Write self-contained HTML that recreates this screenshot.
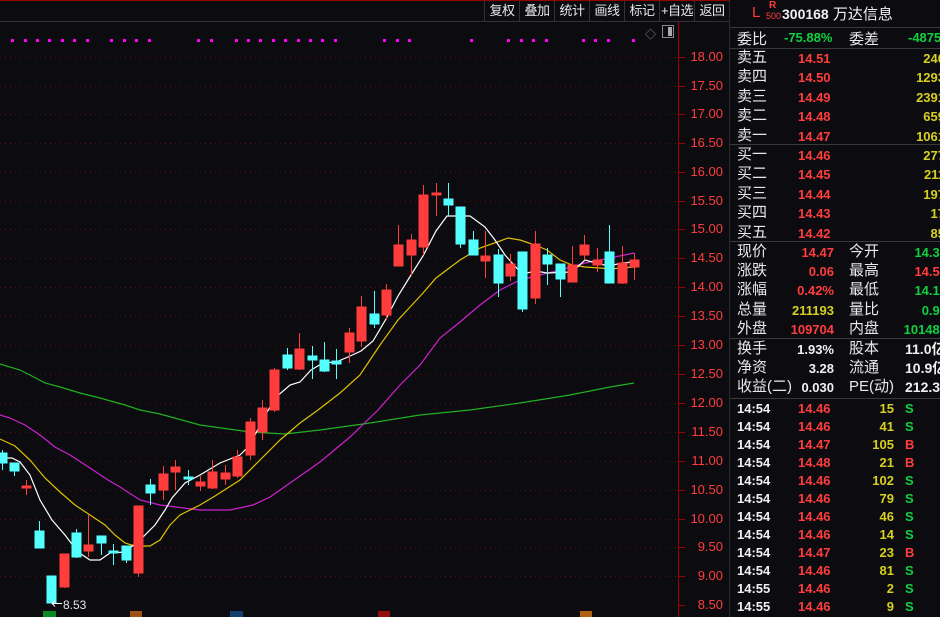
<!DOCTYPE html>
<html><head><meta charset="utf-8"><style>
*{margin:0;padding:0;box-sizing:border-box}
body{width:940px;height:617px;background:#0c0c10;overflow:hidden;position:relative;font-family:"Liberation Sans","Noto Sans CJK SC",sans-serif;color:#e8e8e8}
.a{position:absolute;white-space:nowrap}
.menu{position:absolute;top:0;left:484px;height:22px;display:flex}
.menu div{height:22px;width:35px;line-height:22px;font-size:13px;color:#e8e8e8;text-align:center;border-left:1px solid #333;overflow:hidden;letter-spacing:-0.5px}
.r{color:#ff3d3d}.g{color:#10d040}.y{color:#d8d020}.w{color:#f0f0f0}
.lb{font-size:15px;color:#e8e8e8}
.n{font-weight:bold;font-size:13px}
.pl{position:absolute;left:690px;font-size:13px;color:#ff3d3d;width:33px;text-align:right}
</style></head><body>
<div class="a" style="left:0;top:0;width:730px;height:1px;background:#900"></div>
<div class="a" style="left:0;top:21px;width:730px;height:1px;background:#333"></div>
<div class="menu"><div>复权</div><div>叠加</div><div>统计</div><div>画线</div><div>标记</div><div>+自选</div><div>返回</div></div>
<div class="a" style="left:645px;top:26px;font-size:11px;color:#888">◇</div>
<div class="a" style="left:662px;top:25px;width:12px;height:13px;border:1px solid #888"><div style="position:absolute;right:1px;top:1px;width:4px;height:9px;background:#aaa"></div></div>
<div class="a" style="left:729px;top:0;width:1px;height:617px;background:#2a2a2a"></div>

<svg class="a" style="left:0;top:0" width="730" height="617">
<g stroke="#5a1010" stroke-dasharray="1,4" stroke-width="1">
<line x1="0" y1="57.5" x2="678" y2="57.5"/><line x1="0" y1="86.5" x2="678" y2="86.5"/><line x1="0" y1="114.5" x2="678" y2="114.5"/><line x1="0" y1="143.5" x2="678" y2="143.5"/><line x1="0" y1="172.5" x2="678" y2="172.5"/><line x1="0" y1="201.5" x2="678" y2="201.5"/><line x1="0" y1="229.5" x2="678" y2="229.5"/><line x1="0" y1="258.5" x2="678" y2="258.5"/><line x1="0" y1="287.5" x2="678" y2="287.5"/><line x1="0" y1="316.5" x2="678" y2="316.5"/><line x1="0" y1="345.5" x2="678" y2="345.5"/><line x1="0" y1="374.5" x2="678" y2="374.5"/><line x1="0" y1="403.5" x2="678" y2="403.5"/><line x1="0" y1="432.5" x2="678" y2="432.5"/><line x1="0" y1="461.5" x2="678" y2="461.5"/><line x1="0" y1="490.5" x2="678" y2="490.5"/><line x1="0" y1="519.5" x2="678" y2="519.5"/><line x1="0" y1="547.5" x2="678" y2="547.5"/><line x1="0" y1="576.5" x2="678" y2="576.5"/>
</g>
<line x1="678.5" y1="22" x2="678.5" y2="617" stroke="#a00000"/>
<g stroke="#a00000"><line x1="678" y1="57.5" x2="685" y2="57.5"/><line x1="678" y1="86.5" x2="685" y2="86.5"/><line x1="678" y1="114.5" x2="685" y2="114.5"/><line x1="678" y1="143.5" x2="685" y2="143.5"/><line x1="678" y1="172.5" x2="685" y2="172.5"/><line x1="678" y1="201.5" x2="685" y2="201.5"/><line x1="678" y1="229.5" x2="685" y2="229.5"/><line x1="678" y1="258.5" x2="685" y2="258.5"/><line x1="678" y1="287.5" x2="685" y2="287.5"/><line x1="678" y1="316.5" x2="685" y2="316.5"/><line x1="678" y1="345.5" x2="685" y2="345.5"/><line x1="678" y1="374.5" x2="685" y2="374.5"/><line x1="678" y1="403.5" x2="685" y2="403.5"/><line x1="678" y1="432.5" x2="685" y2="432.5"/><line x1="678" y1="461.5" x2="685" y2="461.5"/><line x1="678" y1="490.5" x2="685" y2="490.5"/><line x1="678" y1="519.5" x2="685" y2="519.5"/><line x1="678" y1="547.5" x2="685" y2="547.5"/><line x1="678" y1="576.5" x2="685" y2="576.5"/><line x1="678" y1="605.5" x2="685" y2="605.5"/></g>
<g fill="#ff00ff">
<rect x="11" y="39" width="3" height="3"/><rect x="24" y="39" width="3" height="3"/><rect x="36" y="39" width="3" height="3"/><rect x="48" y="39" width="3" height="3"/><rect x="61" y="39" width="3" height="3"/><rect x="73" y="39" width="3" height="3"/><rect x="86" y="39" width="3" height="3"/><rect x="110" y="39" width="3" height="3"/><rect x="123" y="39" width="3" height="3"/><rect x="135" y="39" width="3" height="3"/><rect x="148" y="39" width="3" height="3"/><rect x="197" y="39" width="3" height="3"/><rect x="210" y="39" width="3" height="3"/><rect x="235" y="39" width="3" height="3"/><rect x="247" y="39" width="3" height="3"/><rect x="259" y="39" width="3" height="3"/><rect x="272" y="39" width="3" height="3"/><rect x="284" y="39" width="3" height="3"/><rect x="297" y="39" width="3" height="3"/><rect x="309" y="39" width="3" height="3"/><rect x="321" y="39" width="3" height="3"/><rect x="334" y="39" width="3" height="3"/><rect x="383" y="39" width="3" height="3"/><rect x="396" y="39" width="3" height="3"/><rect x="408" y="39" width="3" height="3"/><rect x="470" y="39" width="3" height="3"/><rect x="507" y="39" width="3" height="3"/><rect x="520" y="39" width="3" height="3"/><rect x="532" y="39" width="3" height="3"/><rect x="545" y="39" width="3" height="3"/><rect x="582" y="39" width="3" height="3"/><rect x="594" y="39" width="3" height="3"/><rect x="607" y="39" width="3" height="3"/><rect x="632" y="39" width="3" height="3"/>
</g>
<g fill="none" stroke-width="1.2">
<polyline stroke="#20b020" points="0,364 20,370 30,375 45,383 60,387 80,393 100,398 125,405 140,410 160,414 200,425 250,432 285,434 320,430 370,423 420,415 470,410 520,403 570,395 610,387 634,383"/>
<polyline stroke="#d020d0" points="0,415 10,418 25,425 40,435 55,447 70,455 90,468 108,480 120,487 140,500 160,505 200,510 230,510 253,505 270,497 290,483 320,462 350,437 378,410 400,385 420,365 440,338 460,322 480,305 500,290 520,280 540,275 560,270 585,263 610,258 634,253"/>
<polyline stroke="#e0c000" points="0,439 15,446 30,460 45,478 60,492 75,505 90,515 105,525 115,535 125,543 135,546 150,546 160,540 170,525 180,515 200,505 215,496 240,480 260,460 280,440 300,423 318,410 340,393 360,375 380,345 398,320 411,306 423,293 436,278 460,260 480,248 500,241 508,238 520,240 535,245 547,250 560,260 572,265 585,267 600,268 610,269 634,267"/>
<polyline stroke="#ffffff" points="0,458 12,458 20,462 30,475 40,500 52,520 65,535 78,552 90,560 100,560 110,553 125,552 140,540 155,525 165,510 172,498 185,483 200,475 220,463 240,455 250,445 260,425 275,398 290,385 300,382 311,370 323,363 336,362 348,357 361,351 373,341 386,319 398,296 411,275 423,256 436,231 447,216 470,216 485,227 495,240 505,255 522,274 536,271 547,273 572,272 585,260 600,264 609,266 622,263 634,262"/>
</g>
<g stroke-width="1">
<g stroke="#54ffff" fill="#54ffff">
<line x1="2.5" y1="450" x2="2.5" y2="470"/><rect x="-2" y="453" width="9" height="10"/>
<line x1="14.5" y1="463" x2="14.5" y2="476"/><rect x="10" y="463" width="9" height="8"/>
<line x1="39.5" y1="521" x2="39.5" y2="548"/><rect x="35" y="531" width="9" height="17"/>
<rect x="47" y="576" width="9" height="27"/>
<line x1="76.5" y1="529" x2="76.5" y2="558"/><rect x="72" y="533" width="9" height="24"/>
<line x1="101.5" y1="536" x2="101.5" y2="555"/><rect x="97" y="536" width="9" height="7"/>
<line x1="113.5" y1="544" x2="113.5" y2="565"/><rect x="109" y="551" width="9" height="2"/>
<line x1="126.5" y1="546" x2="126.5" y2="563"/><rect x="122" y="546" width="9" height="14"/>
<line x1="150.5" y1="479" x2="150.5" y2="505"/><rect x="146" y="485" width="9" height="8"/>
<line x1="188.5" y1="470" x2="188.5" y2="485"/><rect x="184" y="477" width="9" height="2"/>
<line x1="287.5" y1="348" x2="287.5" y2="370"/><rect x="283" y="355" width="9" height="13"/>
<line x1="312.5" y1="346" x2="312.5" y2="379"/><rect x="308" y="356" width="9" height="4"/>
<line x1="324.5" y1="342" x2="324.5" y2="372"/><rect x="320" y="360" width="9" height="11"/>
<line x1="336.5" y1="349" x2="336.5" y2="379"/><rect x="332" y="361" width="9" height="3"/>
<line x1="374.5" y1="291" x2="374.5" y2="328"/><rect x="370" y="314" width="9" height="10"/>
<line x1="448.5" y1="183" x2="448.5" y2="216"/><rect x="444" y="199" width="9" height="6"/>
<line x1="460.5" y1="207" x2="460.5" y2="248"/><rect x="456" y="207" width="9" height="37"/>
<line x1="473.5" y1="231" x2="473.5" y2="255"/><rect x="469" y="240" width="9" height="15"/>
<line x1="498.5" y1="249" x2="498.5" y2="297"/><rect x="494" y="255" width="9" height="28"/>
<line x1="522.5" y1="252" x2="522.5" y2="312"/><rect x="518" y="252" width="9" height="57"/>
<line x1="547.5" y1="248" x2="547.5" y2="285"/><rect x="543" y="255" width="9" height="9"/>
<line x1="560.5" y1="264" x2="560.5" y2="297"/><rect x="556" y="264" width="9" height="15"/>
<line x1="609.5" y1="225" x2="609.5" y2="283"/><rect x="605" y="252" width="9" height="31"/>
</g>
<g stroke="#ff3d3d" fill="#ff3d3d">
<line x1="26.5" y1="480" x2="26.5" y2="495"/><rect x="22" y="486" width="9" height="2"/>
<line x1="64.5" y1="554" x2="64.5" y2="588"/><rect x="60" y="554" width="9" height="33"/>
<line x1="88.5" y1="515" x2="88.5" y2="557"/><rect x="84" y="545" width="9" height="6"/>
<line x1="138.5" y1="506" x2="138.5" y2="577"/><rect x="134" y="506" width="9" height="67"/>
<line x1="163.5" y1="466" x2="163.5" y2="500"/><rect x="159" y="474" width="9" height="16"/>
<line x1="175.5" y1="460" x2="175.5" y2="490"/><rect x="171" y="467" width="9" height="5"/>
<line x1="200.5" y1="476" x2="200.5" y2="491"/><rect x="196" y="482" width="9" height="4"/>
<line x1="212.5" y1="460" x2="212.5" y2="489"/><rect x="208" y="472" width="9" height="16"/>
<line x1="225.5" y1="465" x2="225.5" y2="485"/><rect x="221" y="473" width="9" height="6"/>
<line x1="237.5" y1="450" x2="237.5" y2="478"/><rect x="233" y="457" width="9" height="19"/>
<line x1="250.5" y1="418" x2="250.5" y2="460"/><rect x="246" y="422" width="9" height="33"/>
<line x1="262.5" y1="400" x2="262.5" y2="440"/><rect x="258" y="408" width="9" height="24"/>
<line x1="274.5" y1="368" x2="274.5" y2="412"/><rect x="270" y="370" width="9" height="40"/>
<line x1="299.5" y1="333" x2="299.5" y2="370"/><rect x="295" y="349" width="9" height="20"/>
<line x1="349.5" y1="328" x2="349.5" y2="363"/><rect x="345" y="333" width="9" height="19"/>
<line x1="361.5" y1="296" x2="361.5" y2="347"/><rect x="357" y="307" width="9" height="34"/>
<line x1="386.5" y1="284" x2="386.5" y2="320"/><rect x="382" y="290" width="9" height="25"/>
<line x1="398.5" y1="225" x2="398.5" y2="266"/><rect x="394" y="245" width="9" height="21"/>
<line x1="411.5" y1="234" x2="411.5" y2="276"/><rect x="407" y="240" width="9" height="15"/>
<line x1="423.5" y1="185" x2="423.5" y2="255"/><rect x="419" y="195" width="9" height="52"/>
<line x1="436.5" y1="183" x2="436.5" y2="216"/><rect x="432" y="193" width="9" height="2"/>
<line x1="485.5" y1="231" x2="485.5" y2="278"/><rect x="481" y="256" width="9" height="5"/>
<line x1="510.5" y1="254" x2="510.5" y2="281"/><rect x="506" y="264" width="9" height="12"/>
<line x1="535.5" y1="231" x2="535.5" y2="304"/><rect x="531" y="244" width="9" height="54"/>
<line x1="572.5" y1="246" x2="572.5" y2="282"/><rect x="568" y="265" width="9" height="17"/>
<line x1="584.5" y1="235" x2="584.5" y2="260"/><rect x="580" y="245" width="9" height="10"/>
<line x1="597.5" y1="248" x2="597.5" y2="272"/><rect x="593" y="260" width="9" height="5"/>
<line x1="622.5" y1="246" x2="622.5" y2="284"/><rect x="618" y="263" width="9" height="20"/>
<line x1="634.5" y1="253" x2="634.5" y2="280"/><rect x="630" y="260" width="9" height="7"/>
</g>
</g>
<line x1="52" y1="603.5" x2="62" y2="603.5" stroke="#fff"/><path d="M52 603.5 L55 600.5 M52 603.5 L55 606.5" stroke="#fff" fill="none"/>
<text x="63" y="609" fill="#e8e8e8" font-size="12" font-family="Liberation Sans">8.53</text>
<rect x="43" y="611" width="13" height="8" fill="#0a8a20"/>
<rect x="130" y="611" width="12" height="8" fill="#a05010"/>
<rect x="230" y="611" width="13" height="8" fill="#104070"/>
<rect x="378" y="611" width="12" height="8" fill="#901010"/>
<rect x="580" y="611" width="12" height="8" fill="#b06010"/>
</svg>

<div class="pl" style="top:49px">18.00</div><div class="pl" style="top:78px">17.50</div><div class="pl" style="top:106px">17.00</div><div class="pl" style="top:135px">16.50</div><div class="pl" style="top:164px">16.00</div><div class="pl" style="top:193px">15.50</div><div class="pl" style="top:221px">15.00</div><div class="pl" style="top:250px">14.50</div><div class="pl" style="top:279px">14.00</div><div class="pl" style="top:308px">13.50</div><div class="pl" style="top:337px">13.00</div><div class="pl" style="top:366px">12.50</div><div class="pl" style="top:395px">12.00</div><div class="pl" style="top:424px">11.50</div><div class="pl" style="top:453px">11.00</div><div class="pl" style="top:482px">10.50</div><div class="pl" style="top:511px">10.00</div><div class="pl" style="top:539px">9.50</div><div class="pl" style="top:568px">9.00</div><div class="pl" style="top:597px">8.50</div>

<div class="a" style="left:730px;top:0;width:210px;height:617px;overflow:hidden">
<div class="a r" style="left:22px;top:4px;font-size:15px">L</div>
<div class="a r" style="left:39px;top:0;font-size:10px;font-weight:bold">R</div>
<div class="a r" style="left:36px;top:11px;font-size:9px">500</div>
<div class="a w" style="left:52px;top:3px;font-size:15px"><b style="font-size:14px">300168</b> 万达信息</div>
<div class="a" style="left:0;top:27px;width:210px;height:1px;background:#3a3a3a"></div>
<div class="a lb" style="left:7px;top:28px">委比</div><div class="a n g" style="left:54px;top:30px">-75.88%</div>
<div class="a lb" style="left:119px;top:28px">委差</div><div class="a n g" style="left:178px;top:30px">-4875</div>
<div class="a" style="left:0;top:48px;width:210px;height:1px;background:#3a3a3a"></div>
<div class="a" style="left:7px;top:48px;line-height:19.4px;font-size:15px">卖五<br>卖四<br>卖三<br>卖二<br>卖一</div>
<div class="a n r" style="left:68px;top:49px;line-height:19.4px">14.51<br>14.50<br>14.49<br>14.48<br>14.47</div>
<div class="a n y" style="left:170px;top:49px;line-height:19.4px;width:45px;text-align:right">240<br>1293<br>2391<br>659<br>1061</div>
<div class="a" style="left:0;top:144px;width:210px;height:1px;background:#3a3a3a"></div>
<div class="a" style="left:7px;top:145px;line-height:19.4px;font-size:15px">买一<br>买二<br>买三<br>买四<br>买五</div>
<div class="a n r" style="left:68px;top:146px;line-height:19.4px">14.46<br>14.45<br>14.44<br>14.43<br>14.42</div>
<div class="a n y" style="left:170px;top:146px;line-height:19.4px;width:45px;text-align:right">277<br>211<br>197<br>17<br>85</div>
<div class="a" style="left:0;top:241px;width:210px;height:1px;background:#3a3a3a"></div>
<div class="a" style="left:7px;top:242px;line-height:19.2px;font-size:15px">现价<br>涨跌<br>涨幅<br>总量<br>外盘</div>
<div class="a n" style="left:40px;top:243px;line-height:19.2px;width:64px;text-align:right"><span class="r">14.47</span><br><span class="r">0.06</span><br><span class="r">0.42%</span><br><span class="y">211193</span><br><span class="r">109704</span></div>
<div class="a" style="left:119px;top:242px;line-height:19.2px;font-size:15px">今开<br>最高<br>最低<br>量比<br>内盘</div>
<div class="a n" style="left:165px;top:243px;line-height:19.2px;width:52px;text-align:right"><span class="g">14.39</span><br><span class="r">14.55</span><br><span class="g">14.12</span><br><span class="g">0.98</span><br><span class="g">101489</span></div>
<div class="a" style="left:0;top:338px;width:210px;height:1px;background:#3a3a3a"></div>
<div class="a" style="left:7px;top:339px;line-height:19.2px;font-size:15px">换手<br>净资<br>收益(二)</div>
<div class="a n w" style="left:40px;top:340px;line-height:19.2px;width:64px;text-align:right">1.93%<br>3.28<br>0.030</div>
<div class="a" style="left:119px;top:339px;line-height:19.2px;font-size:15px">股本<br>流通<br>PE(动)</div>
<div class="a n w" style="left:175px;top:340px;line-height:19.2px;font-size:14px">11.0亿<br>10.9亿<br>212.3</div>
<div class="a" style="left:0;top:398px;width:210px;height:1px;background:#3a3a3a"></div>
<div class="a n w" style="left:7px;top:400px;line-height:18px">14:54<br>14:54<br>14:54<br>14:54<br>14:54<br>14:54<br>14:54<br>14:54<br>14:54<br>14:54<br>14:55<br>14:55</div>
<div class="a n r" style="left:68px;top:400px;line-height:18px">14.46<br>14.46<br>14.47<br>14.48<br>14.46<br>14.46<br>14.46<br>14.46<br>14.47<br>14.46<br>14.46<br>14.46</div>
<div class="a n y" style="left:130px;top:400px;line-height:18px;width:34px;text-align:right">15<br>41<br>105<br>21<br>102<br>79<br>46<br>14<br>23<br>81<br>2<br>9</div>
<div class="a n" style="left:175px;top:400px;line-height:18px"><span class="g">S</span><br><span class="g">S</span><br><span class="r">B</span><br><span class="r">B</span><br><span class="g">S</span><br><span class="g">S</span><br><span class="g">S</span><br><span class="g">S</span><br><span class="r">B</span><br><span class="g">S</span><br><span class="g">S</span><br><span class="g">S</span></div>
</div>
</body></html>
